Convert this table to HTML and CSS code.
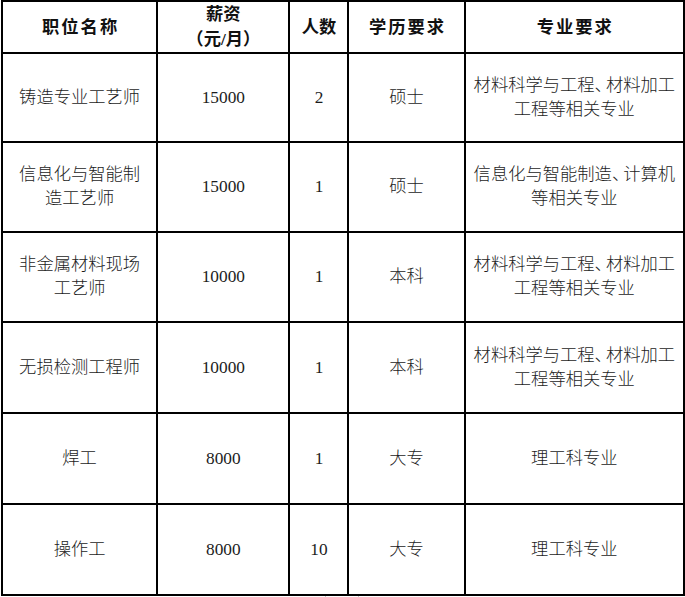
FILE: index.html
```html
<!DOCTYPE html>
<html lang="zh-CN">
<head>
<meta charset="utf-8">
<title>招聘岗位</title>
<link rel="stylesheet" href="styles.css">
</head>
<body>
<table class="jobs">
  <colgroup>
    <col class="c1"><col class="c2"><col class="c3"><col class="c4"><col class="c5">
  </colgroup>
  <thead>
    <tr class="r-head">
      <th class="sp">职位名称</th>
      <th>薪资<br>（元/月）</th>
      <th>人数</th>
      <th class="sp">学历要求</th>
      <th class="sp">专业要求</th>
    </tr>
  </thead>
  <tbody>
    <tr class="r1">
      <td>铸造专业工艺师</td>
      <td>15000</td>
      <td>2</td>
      <td>硕士</td>
      <td>材料科学与工程<span class="dun">、</span>材料加工<br>工程等相关专业</td>
    </tr>
    <tr class="r2">
      <td>信息化与智能制<br>造工艺师</td>
      <td>15000</td>
      <td>1</td>
      <td>硕士</td>
      <td>信息化与智能制造<span class="dun">、</span>计算机<br>等相关专业</td>
    </tr>
    <tr class="r3">
      <td>非金属材料现场<br>工艺师</td>
      <td>10000</td>
      <td>1</td>
      <td>本科</td>
      <td>材料科学与工程<span class="dun">、</span>材料加工<br>工程等相关专业</td>
    </tr>
    <tr class="r4">
      <td>无损检测工程师</td>
      <td>10000</td>
      <td>1</td>
      <td>本科</td>
      <td>材料科学与工程<span class="dun">、</span>材料加工<br>工程等相关专业</td>
    </tr>
    <tr class="r5">
      <td>焊工</td>
      <td>8000</td>
      <td>1</td>
      <td>大专</td>
      <td>理工科专业</td>
    </tr>
    <tr class="r6">
      <td>操作工</td>
      <td>8000</td>
      <td>10</td>
      <td>大专</td>
      <td>理工科专业</td>
    </tr>
  </tbody>
</table>
<div class="ghost"></div>
</body>
</html>
```
FILE: styles.css
```css
html, body {
  margin: 0;
  padding: 0;
  background: #ffffff;
}

body {
  font-family: "Liberation Serif", "Noto Sans CJK SC", serif;
  font-size: 17.3px;
  color: #1c1c1c;
}

.jobs {
  margin-left: 1px;
  border-collapse: separate;
  border-spacing: 0;
  table-layout: fixed;
  width: 684px;
  border-left: 2px solid #000;
  border-top: 2px solid #000;
}

.c1 { width: 155px; }
.c2 { width: 132px; }
.c3 { width: 59px; }
.c4 { width: 116px; }
.c5 { width: 219px; }

.jobs th,
.jobs td {
  box-sizing: border-box;
  padding: 0;
  border-right: 2px solid #000;
  border-bottom: 2px solid #000;
  text-align: center;
  vertical-align: middle;
  line-height: 24px;
  font-weight: 300;
}

.jobs th {
  font-weight: 700;
  line-height: 25px;
  color: #111;
}

.jobs th.sp {
  letter-spacing: 2px;
  padding-left: 2px;
}

.dun {
  letter-spacing: -6px;
}

.r-head { height: 51px; }
.r1 { height: 89px; }
.r2 { height: 90px; }
.r3 { height: 90px; }
.r4 { height: 91px; }
.r5 { height: 91px; }
.r6 { height: 91px; }

.r-head th { height: 51px; }
.r1 td { height: 89px; }
.r2 td { height: 90px; }
.r3 td { height: 90px; }
.r4 td,
.r5 td,
.r6 td { height: 91px; }

.ghost {
  margin-left: 325px;
  width: 32px;
  height: 3px;
  border-left: 1px solid #c8c8c8;
  border-right: 1px solid #c8c8c8;
}
```
